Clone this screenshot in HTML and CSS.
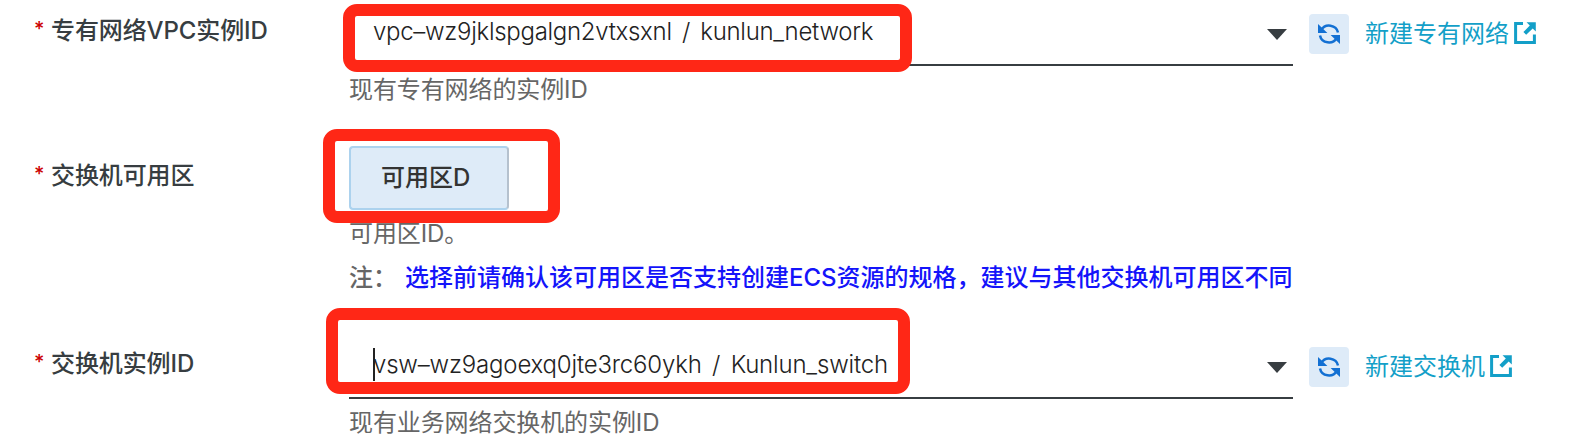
FILE: index.html
```html
<!DOCTYPE html>
<html lang="zh-CN">
<head>
<meta charset="utf-8">
<title>专有网络配置</title>
<link rel="stylesheet" href="styles.css">
</head>
<body>
<svg width="0" height="0" class="symbols">
  <symbol id="refresh" viewBox="0 0 22 22">
    <path d="M3.2 7.2A9 8.6 0 0 1 20 9.6M18.8 14.8A9 8.6 0 0 1 2 12.4" fill="none" stroke="currentColor" stroke-width="2.5"/>
    <path d="M0 1V10H9.4ZM22 21V12H12.6Z" fill="currentColor"/>
  </symbol>
  <symbol id="external" viewBox="0 0 22 22">
    <path d="M9 1.6H1.6V20.4H20.4V12.5" fill="none" stroke="currentColor" stroke-width="3"/>
    <path d="M12.5 .2H21.8V9.5L18.7 6.4L12.2 12.8L9.4 10.1L15.8 3.6Z" fill="currentColor"/>
  </symbol>
</svg>
<form class="form">
  <div class="row row-vpc">
    <div class="label"><span class="star">*</span>专有网络VPC实例ID</div>
    <div class="field">
      <div class="select"><span class="value value-vpc">vpc–wz9jklspgalgn2vtxsxnl / kunlun_network</span><i class="caret"></i></div>
      <div class="help">现有专有网络的实例ID</div>
      <div class="mark mark-vpc"></div>
    </div>
    <div class="actions">
      <span class="refresh"><svg width="22" height="22"><use href="#refresh"/></svg></span>
      <a class="link">新建专有网络<svg width="22" height="22"><use href="#external"/></svg></a>
    </div>
  </div>
  <div class="row row-zone">
    <div class="label"><span class="star">*</span>交换机可用区</div>
    <div class="field">
      <div class="zone">可用区D</div>
      <div class="help help-zone">可用区ID。</div>
      <div class="note"><span class="note-head">注：</span><b class="note-text">选择前请确认该可用区是否支持创建ECS资源的规格，建议与其他交换机可用区不同</b></div>
      <div class="mark mark-zone"></div>
    </div>
  </div>
  <div class="row row-switch">
    <div class="label"><span class="star">*</span>交换机实例ID</div>
    <div class="field">
      <div class="select"><span class="value value-switch">vsw–wz9agoexq0jte3rc60ykh / Kunlun_switch<i class="cursor"></i></span><i class="caret"></i></div>
      <div class="help">现有业务网络交换机的实例ID</div>
      <div class="mark mark-switch"></div>
    </div>
    <div class="actions">
      <span class="refresh"><svg width="22" height="22"><use href="#refresh"/></svg></span>
      <a class="link">新建交换机<svg width="22" height="22"><use href="#external"/></svg></a>
    </div>
  </div>
</form>
</body>
</html>
```
FILE: styles.css
```css
* { box-sizing: border-box; }
body {
  margin: 0;
  background: #fff;
  overflow: hidden;
  font: 24px/32px Inter, "Noto Sans CJK SC", sans-serif;
  color: #373d41;
  white-space: nowrap;
}
.symbols { position: absolute; }
.form { width: 1570px; height: 444px; }
.row {
  display: grid;
  grid-template-columns: 349px 944px 1fr;
}
.row-vpc { height: 146px; }
.row-zone { height: 187px; }
.row-switch { height: 111px; }
.label {
  display: flex;
  padding: 15px 0 0 34px;
  font-weight: 500;
  letter-spacing: -.1px;
}
.row-zone .label { padding-top: 14px; }
.star { width: 17px; color: #c00; font-size: 20px; line-height: 28px; }
.field { position: relative; }
.select {
  display: flex;
  justify-content: space-between;
  height: 66px;
  padding: 16px 6px 0 24px;
  border-bottom: 2px solid #373d41;
}
.value {
  position: relative;
  color: #222;
  font-weight: 350;
  letter-spacing: -.29px;
  word-spacing: 3.8px;
}
.value-switch { letter-spacing: -.18px; }
.cursor {
  position: absolute;
  left: 0;
  top: -1px;
  width: 2px;
  height: 33px;
  background: #222;
}
.caret {
  margin-top: 13px;
  width: 0;
  height: 11px;
  border: solid transparent;
  border-width: 11px 10.5px 0;
  border-top-color: #373d41;
}
.help { margin-top: 8px; color: #666; letter-spacing: -.1px; }
.zone {
  width: 160px;
  height: 64px;
  border: 2px solid #acd2ee;
  border-right-color: #b5c1ce;
  border-radius: 4px;
  background: #deebf8;
  padding: 14px 30px;
  color: #333;
  font-weight: 500;
}
.help-zone { margin-top: 8px; }
.note { display: flex; margin-top: 12px; font-weight: 500; color: #666; }
.note-head { width: 56px; }
.note-text { color: #1414fa; font-weight: 500; }
.actions { display: flex; gap: 16px; padding: 14px 0 0 16px; }
.refresh {
  display: flex;
  align-items: center;
  justify-content: center;
  width: 40px;
  height: 40px;
  border-radius: 4px;
  background: #deebf8;
  color: #1370d3;
}
.link { display: flex; gap: 5px; padding-top: 4px; color: #139fc8; height: 36px; }
.link svg { margin-top: 4px; }
/* Red emphasis frames lie over the fields. */
.mark {
  position: absolute;
  border: 12px solid #ff2716;
  border-radius: 14px;
}
.mark-vpc { left: -6px; top: 4px; width: 569px; height: 68px; }
.mark-zone { left: -26px; top: -17px; width: 237px; height: 94px; }
.mark-switch { left: -23px; top: -25px; width: 584px; height: 86px; }
```
